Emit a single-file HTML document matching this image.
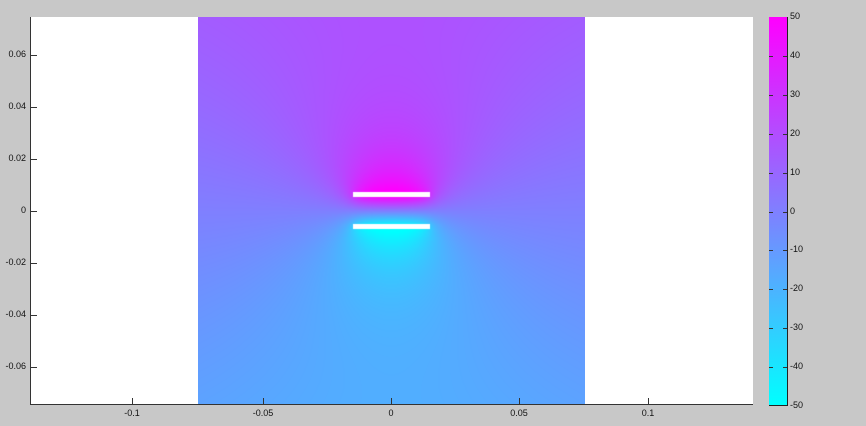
<!DOCTYPE html>
<html><head><meta charset="utf-8">
<style>
body{margin:0;background:#c8c8c8;width:866px;height:426px;overflow:hidden;position:relative;font-family:"Liberation Sans",Arial,sans-serif;font-size:9px;color:#111}
#ax{position:absolute;left:31px;top:17px;width:722px;height:387px;background:#fff}
#cv{position:absolute;left:198px;top:17px;width:387px;height:387px}
.l{position:absolute;white-space:nowrap}
.yl{text-align:right;width:26px;left:0}
.t{position:absolute;background:#333}
#cb{position:absolute;left:769px;top:17px;width:19px;height:389px;background:linear-gradient(#ff00ff,#00ffff);border-right:1px solid #222;border-bottom:1px solid #222;box-sizing:border-box}
</style></head><body>
<div id="ax"></div>
<canvas id="cv" width="387" height="387"></canvas>
<div class="t" style="left:30px;top:17px;width:1px;height:388px"></div>
<div class="t" style="left:30px;top:404px;width:723px;height:1px"></div>
<div id="cb"></div>
<div id="labels"></div>
<script>
var L=document.getElementById('labels'),h='';
var ys=[[0.06,55],[0.04,107],[0.02,159],[0,211],[-0.02,263],[-0.04,315],[-0.06,367]];
ys.forEach(function(a){h+='<div class="l yl" style="top:'+(a[1]-6)+'px">'+a[0]+'</div><div class="t" style="left:31px;top:'+a[1]+'px;width:6px;height:1px"></div>';});
var xs=[[-0.1,132],[-0.05,263],[0,391],[0.05,519],[0.1,648]];
xs.forEach(function(a){h+='<div class="l" style="top:408px;left:'+(a[1]-15)+'px;width:30px;text-align:center">'+a[0]+'</div><div class="t" style="left:'+a[1]+'px;top:398px;width:1px;height:6px"></div>';});
for(var i=0;i<=10;i++){var v=50-i*10,y=17+i*38.9;h+='<div class="l" style="left:790px;top:'+(y-6)+'px">'+v+'</div>';
if(i>0&&i<10)h+='<div class="t" style="left:769px;top:'+Math.round(y)+'px;width:4px;height:1px"></div><div class="t" style="left:783px;top:'+Math.round(y)+'px;width:4px;height:1px"></div>';}
L.innerHTML=h;
var c=document.getElementById('cv'),ctx=c.getContext('2d'),im=ctx.createImageData(387,387),d=im.data;
var N=24,A=55/N,B=125;
for(var py=0;py<387;py++){for(var px=0;px<387;px++){
var x=(px+198-391)/2560,y=(211-(py+17))/2600,V=B*y;
for(var k=0;k<N;k++){var sx=-0.015+0.03*(k+0.5)/N;
var dx=x-sx,d1=y-0.0063,d2=y+0.006;
V+=A*0.5*(Math.log(dx*dx+d2*d2+1e-8)-Math.log(dx*dx+d1*d1+1e-8));}
if(V>50)V=50;if(V<-50)V=-50;var t=(V+50)/100,o=(py*387+px)*4;
d[o]=255*t;d[o+1]=255*(1-t);d[o+2]=255;d[o+3]=255;}}
ctx.putImageData(im,0,0);
ctx.fillStyle='#fff';ctx.fillRect(353-198,192-17,77,5);ctx.fillRect(353-198,224-17,77,5);
</script>
</body></html>
